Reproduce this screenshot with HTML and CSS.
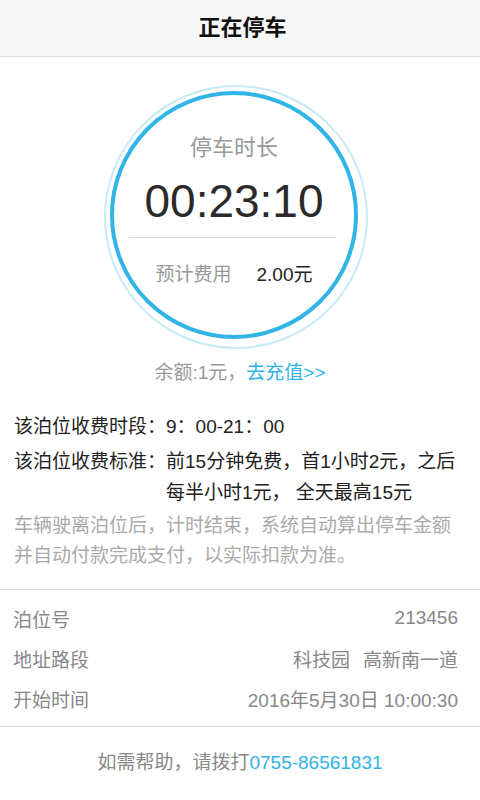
FILE: index.html
```html
<!DOCTYPE html>
<html lang="zh-CN">

<head>
    <meta charset="UTF-8">
    <meta name="viewport" content="width=device-width, initial-scale=1.0">
    <title>正在停车</title>
    <link rel="stylesheet" href="styles.css">
</head>

<body>

    <div class="header">正在停车</div>

    <div class="dial">
        <div class="ring">
            <p class="ring-label">停车时长</p>
            <p class="timer">00:23:10</p>
            <div class="ring-line"></div>
            <p class="fee"><span class="fee-label">预计费用</span><span class="fee-value">2.00元</span></p>
        </div>
    </div>

    <p class="balance">余额:1元，<a class="link" href="#">去充值&gt;&gt;</a></p>

    <div class="rules">
        <span class="rule-label">该泊位收费时段：</span>
        <span class="rule-value">9：00-21：00</span>
        <span class="rule-label">该泊位收费标准：</span>
        <span class="rule-value">前15分钟免费，首1小时2元，之后<br>每半小时1元， 全天最高15元</span>
    </div>

    <p class="note">车辆驶离泊位后，计时结束，系统自动算出停车金额并自动付款完成支付，以实际扣款为准。</p>

    <div class="info">
        <div class="info-row"><span>泊位号</span><span>213456</span></div>
        <div class="info-row"><span>地址路段</span><span>科技园<span class="sp"></span>高新南一道</span></div>
        <div class="info-row"><span>开始时间</span><span>2016年5月30日 10:00:30</span></div>
    </div>

    <p class="help">如需帮助，请拨打<a class="link" href="#">0755-86561831</a></p>

</body>

</html>
```

FILE: styles.css
```css
body {
    margin: 0;
    background-color: #fff;
    font-family: "Liberation Sans", "Noto Sans CJK SC", sans-serif;
    font-size: 19px;
    color: #222;
}

p {
    margin: 0;
}

.link {
    color: #2fb3e6;
    text-decoration: none;
}

.header {
    height: 56px;
    line-height: 56px;
    padding-left: 5px;
    text-align: center;
    font-size: 22px;
    font-weight: bold;
    color: #111;
    background-color: #f7f7f7;
    border-bottom: 1px solid #dcdcdc;
}

.dial {
    width: 264px;
    height: 264px;
    box-sizing: border-box;
    margin: 28px 0 0 104px;
    padding: 6px;
    border: 2px solid #c6eaf7;
    border-radius: 50%;
}

.ring {
    width: 248px;
    height: 248px;
    box-sizing: border-box;
    margin: -2px;
    padding-top: 38px;
    border: 4px solid #31b5e6;
    border-radius: 50%;
    display: flex;
    flex-direction: column;
    align-items: center;
}

.ring-label {
    font-size: 22px;
    line-height: 30px;
    color: #999;
}

.timer {
    margin-top: 13px;
    font-size: 46px;
    line-height: 50px;
    color: #2a2a2a;
}

.ring-line {
    width: 207px;
    height: 1px;
    margin-top: 11px;
    margin-right: 3px;
    background-color: #dadada;
}

.fee {
    margin-top: 24px;
    line-height: 26px;
    display: flex;
    gap: 25px;
}

.fee-label {
    color: #999;
}

.fee-value {
    color: #222;
}

.balance {
    margin-top: 11px;
    line-height: 26px;
    text-align: center;
    color: #999;
}

.rules {
    margin-top: 25px;
    padding-left: 14px;
    display: grid;
    grid-template-columns: 152px auto;
    row-gap: 4px;
    line-height: 31px;
    white-space: nowrap;
}

.note {
    margin-top: 3px;
    padding: 0 14px;
    line-height: 30px;
    color: #aaa;
}

.info {
    margin-top: 18px;
    padding: 8px 22px 8px 13px;
    border-top: 1px solid #dcdcdc;
    border-bottom: 1px solid #dcdcdc;
}

.info-row {
    height: 40px;
    display: flex;
    justify-content: space-between;
    align-items: center;
    color: #888;
}

.sp {
    display: inline-block;
    width: 13px;
}

.help {
    margin-top: 23px;
    line-height: 26px;
    text-align: center;
    color: #888;
}
```
